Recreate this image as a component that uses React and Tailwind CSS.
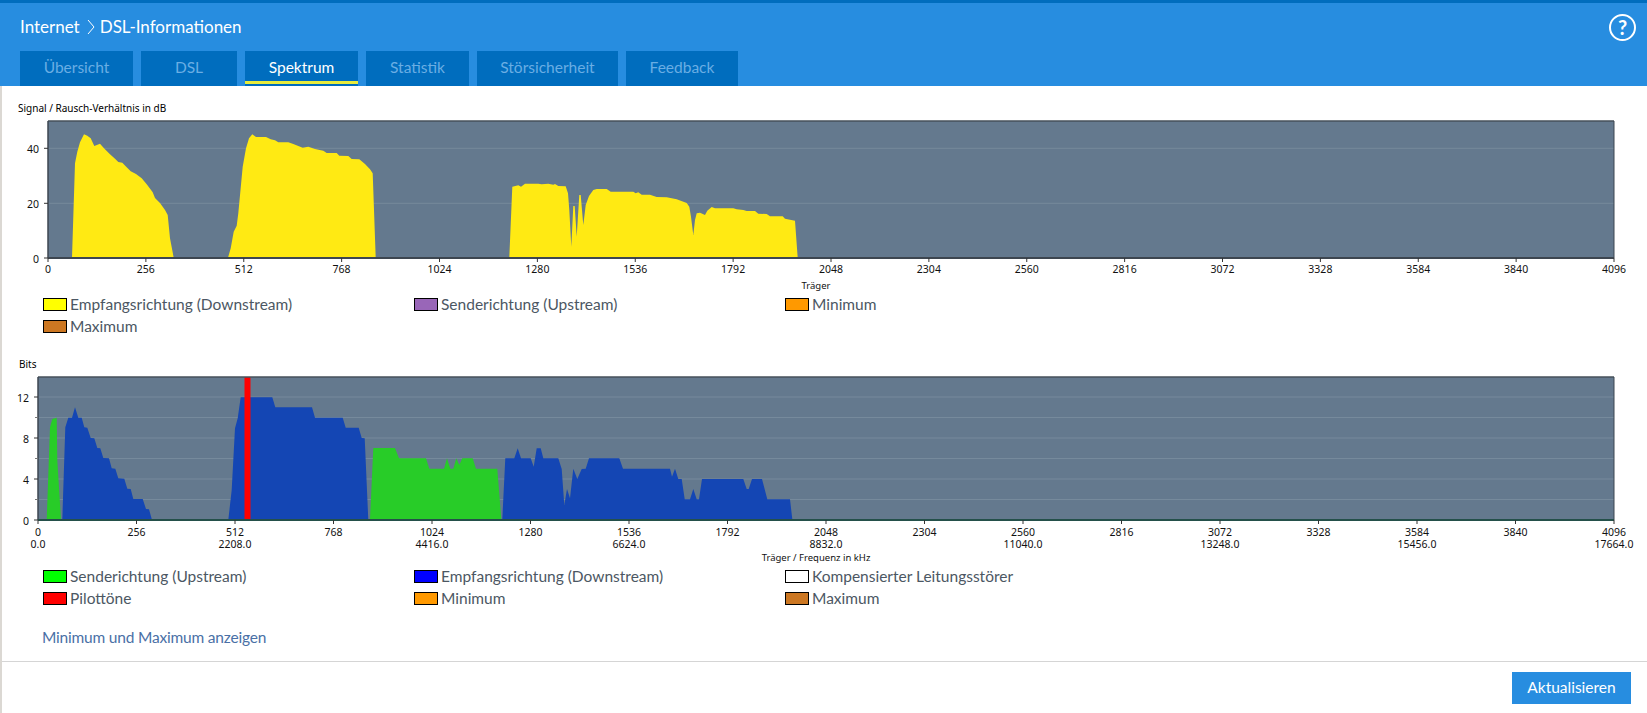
const SANS = "font-['Lato','Noto_Sans',sans-serif]";

const z = (pts, ox, oy) => {
  const out = [];
  for (let i = 0; i < pts.length; i += 2) out.push(`${(ox + pts[i] / 3).toFixed(1)},${(oy + pts[i + 1] / 3).toFixed(1)}`);
  return out.join(" ");
};

const Y1A = [216,443,225,160,232,125,240,97,252,73,262,77,272,85,283,108,300,101,312,115,330,133,345,146,355,156,367,158,380,172,392,184,408,192,425,205,440,223,458,247,465,264,480,279,495,300,503,315,510,385,521,443];
const Y1B = [684,443,692,415,701,365,710,347,715,310,728,170,738,115,747,85,757,73,768,81,798,81,812,88,825,91,835,97,865,97,880,102,908,113,925,110,945,117,970,122,980,129,1010,129,1018,137,1045,138,1055,147,1078,148,1095,162,1110,178,1118,190,1127,443];
const Y1C = [268,443,277,230,295,226,303,230,315,221,355,221,365,223,385,221,400,224,405,222,415,228,437,229,444,250,448,300,454,410,460,288,464,288,470,380,478,255,482,255,490,345,497,285,507,258,520,240,530,237,560,237,572,245,640,245,647,250,655,247,665,254,690,254,710,261,740,262,770,268,800,279,808,290,813,320,820,375,825,330,830,310,840,308,855,315,862,302,875,291,885,295,940,295,950,298,970,300,980,303,1005,303,1015,311,1040,312,1050,319,1088,319,1095,326,1125,332,1133,443];
const G2A = [140,510,150,232,157,207,170,203,172,330,183,510];
const B2A = [187,510,196,232,205,203,216,203,225,172,235,203,245,203,253,232,262,233,272,264,283,265,292,294,301,295,310,324,327,325,335,355,346,356,355,385,373,386,382,416,392,417,400,447,428,447,438,477,447,478,456,510];
const B2B = [685,510,695,420,705,235,713,205,722,142,817,142,826,172,936,172,945,203,1028,203,1037,233,1076,233,1085,264,1094,265,1105,510];
const G2B = [90,448,100,234,165,234,177,265,258,265,268,296,312,296,321,265,331,296,340,296,349,265,358,285,367,265,398,265,408,296,472,296,484,448];
const B2C = [487,448,496,265,523,265,533,235,543,265,572,265,581,290,590,235,602,235,610,265,655,265,665,297,673,405,681,357,690,385,700,296,712,327,725,297,737,296,747,265,838,265,849,296,990,296,996,320,1005,296,1015,327,1025,327,1034,388,1050,388,1060,357,1070,388,1077,388,1086,327,1210,327,1220,357,1226,357,1236,327,1266,327,1282,388,1350,388,1357,448];

const ticks = Array.from({ length: 17 }, (_, i) => i * 256);
const AXIS = "Noto Sans, sans-serif";

function Frame({ x0, x1, top, bottom, yTicks, minor, grid, children, freq, title, bottomColor }) {
  const px = (t) => x0 + ((x1 - x0) * t) / 4096;
  return (
    <g fontFamily={AXIS} fontSize="10.5" fill="#111">
      <rect x={x0} y={top} width={x1 - x0} height={bottom - top} fill="#64798e" />
      {grid.map((y) => (
        <line key={y} x1={x0} x2={x1} y1={y} y2={y} stroke="#768a9c" strokeWidth="1" />
      ))}
      {children}
      <line x1={x0} x2={x1} y1={top} y2={top} stroke="#46505a" strokeWidth="1.5" />
      <line x1={x0} x2={x0} y1={top} y2={bottom} stroke="#3d4650" strokeWidth="1.5" />
      <line x1={x1} x2={x1} y1={top} y2={bottom} stroke="#3d4650" strokeWidth="1" />
      <line x1={x0} x2={x1} y1={bottom} y2={bottom} stroke={bottomColor} strokeWidth="2" />
      {yTicks.map(([y, l]) => (
        <g key={l}>
          <line x1={x0 - 4} x2={x0} y1={y} y2={y} stroke="#333" />
          <text x={x0 - 9} y={y + 5} textAnchor="end">{l}</text>
        </g>
      ))}
      {minor.map((y) => (
        <line key={y} x1={x0 - 3} x2={x0} y1={y} y2={y} stroke="#777" />
      ))}
      {ticks.map((t, i) => (
        <g key={t}>
          <line x1={px(t)} x2={px(t)} y1={bottom} y2={bottom + 4} stroke="#333" />
          <text x={px(t)} y={bottom + (freq ? 16 : 15)} textAnchor="middle">{t}</text>
          {freq && i % 2 === 0 && (
            <text x={px(t)} y={bottom + 28} textAnchor="middle">{(t * 4.3125).toFixed(1)}</text>
          )}
        </g>
      ))}
      <text x="816" y={freq ? bottom + 41 : bottom + 31} textAnchor="middle" fontSize="9.5">{title}</text>
    </g>
  );
}

function Legend({ items }) {
  return (
    <div className={`grid grid-cols-[repeat(3,371px)] pl-[41px] text-[15.5px] leading-[22px] text-[#4c5763] ${SANS}`}>
      {items.map(([label, c]) => (
        <div key={label} className="flex items-center gap-[3px] whitespace-nowrap">
          <span className={`w-[24px] h-[13px] border border-black ${c}`} />
          <span>{label}</span>
        </div>
      ))}
    </div>
  );
}

const tabs = [
  ["Übersicht", "w-[113px]"],
  ["DSL", "w-[96px]"],
  ["Spektrum", "w-[113px]"],
  ["Statistik", "w-[103px]"],
  ["Störsicherheit", "w-[141px]"],
  ["Feedback", "w-[112px]"],
];

export default function App() {
  return (
    <div className={`h-[713px] flex flex-col bg-white overflow-hidden ${SANS}`}>
      <header className="h-[86px] border-t-[3px] border-[#006dbe] bg-[#278de0] flex flex-col shrink-0">
        <div className="h-[48px] flex items-center justify-between pl-[20px] pr-[11px]">
          <h1 className="flex items-center text-[17px] font-normal text-white">
            <span>Internet</span>
            <svg viewBox="0 0 8 16" className="w-[8px] h-[16px] ml-[7px] mr-[5px]" fill="none" stroke="white" strokeWidth="1">
              <path d="M1 1l6 7-6 7" />
            </svg>
            <span>DSL-Informationen</span>
          </h1>
          <div className="w-[27px] h-[27px] rounded-full border-2 border-white text-white font-bold text-[20px] leading-none flex items-center justify-center">?</div>
        </div>
        <nav className="flex gap-2 pl-[20px] h-[35px]">
          {tabs.map(([t, w]) =>
            t === "Spektrum" ? (
              <div key={t} className={`${w} bg-[#006dbe] text-white text-[15.5px] text-center pt-[5px]`}>
                <div className="h-[30px] relative">{t}<span className="absolute left-0 right-0 top-[25px] h-[3px] bg-[#e8ec3c]" /></div>
              </div>
            ) : (
              <div key={t} className={`${w} bg-[#006dbe] text-[#6aaee4] text-[15.5px] text-center pt-[5px]`}>{t}</div>
            )
          )}
        </nav>
      </header>

      <main className="flex-1 flex flex-col border-l-2 border-[#dbd8d3]">
        <p className="mt-[15px] pl-[16px] h-[14px] text-[10px] leading-[14px] text-black font-['Noto_Sans',sans-serif]">Signal / Rausch-Verhältnis in dB</p>
        <svg viewBox="2 115 1645 178" className="block w-[1645px] h-[178px]">
          <Frame
            x0={48} x1={1614} top={121} bottom={258} bottomColor="#3d4650"
            grid={[148.3, 203.3]} minor={[]}
            yTicks={[[148.3, "40"], [203.3, "20"], [258, "0"]]}
            title="Träger"
          >
            <polygon points={z(Y1A, 0, 110)} fill="#ffea13" />
            <polygon points={z(Y1B, 0, 110)} fill="#ffea13" />
            <polygon points={z(Y1C, 420, 110)} fill="#ffea13" />
          </Frame>
        </svg>
        <Legend items={[
          ["Empfangsrichtung (Downstream)", "bg-[#ffff00]"],
          ["Senderichtung (Upstream)", "bg-[#9966b8]"],
          ["Minimum", "bg-[#ff9900]"],
          ["Maximum", "bg-[#cc7722]"],
        ]} />

        <p className="mt-[20px] pl-[17px] h-[14px] text-[10px] leading-[14px] text-black font-['Noto_Sans',sans-serif]">Bits</p>
        <svg viewBox="2 371 1645 194" className="block w-[1645px] h-[194px]">
          <Frame
            x0={38} x1={1614} top={377} bottom={520} bottomColor="#24504a" freq
            grid={[397, 417.5, 438, 458.5, 479, 499.5]}
            minor={[417.5, 458.5, 499.5]}
            yTicks={[[397, "12"], [438, "8"], [479, "4"], [520, "0"]]}
            title="Träger / Frequenz in kHz"
          >
            <polygon points={z(G2A, 0, 350)} fill="#28cc28" />
            <polygon points={z(B2A, 0, 350)} fill="#1446b4" />
            <polygon points={z(B2B, 0, 350)} fill="#1446b4" />
            <polygon points={z(G2B, 340, 370)} fill="#28cc28" />
            <polygon points={z(B2C, 340, 370)} fill="#1446b4" />
            <rect x="244.5" y="377" width="6" height="143" fill="#ff0000" />
          </Frame>
        </svg>
        <Legend items={[
          ["Senderichtung (Upstream)", "bg-[#00ff00]"],
          ["Empfangsrichtung (Downstream)", "bg-[#0000ff]"],
          ["Kompensierter Leitungsstörer", "bg-white"],
          ["Pilottöne", "bg-[#ff0000]"],
          ["Minimum", "bg-[#ff9900]"],
          ["Maximum", "bg-[#cc7722]"],
        ]} />

        <a className="mt-[17px] pl-[40px] text-[15.5px] tracking-[-0.2px] leading-[22px] text-[#4a70a6]">Minimum und Maximum anzeigen</a>

        <footer className="mt-[13px] border-t border-[#d5d5d5] flex-1 flex justify-end pt-[10px] pr-[16px]">
          <button className="w-[119px] h-[32px] bg-[#278de0] text-white text-[15.5px]">Aktualisieren</button>
        </footer>
      </main>
    </div>
  );
}
